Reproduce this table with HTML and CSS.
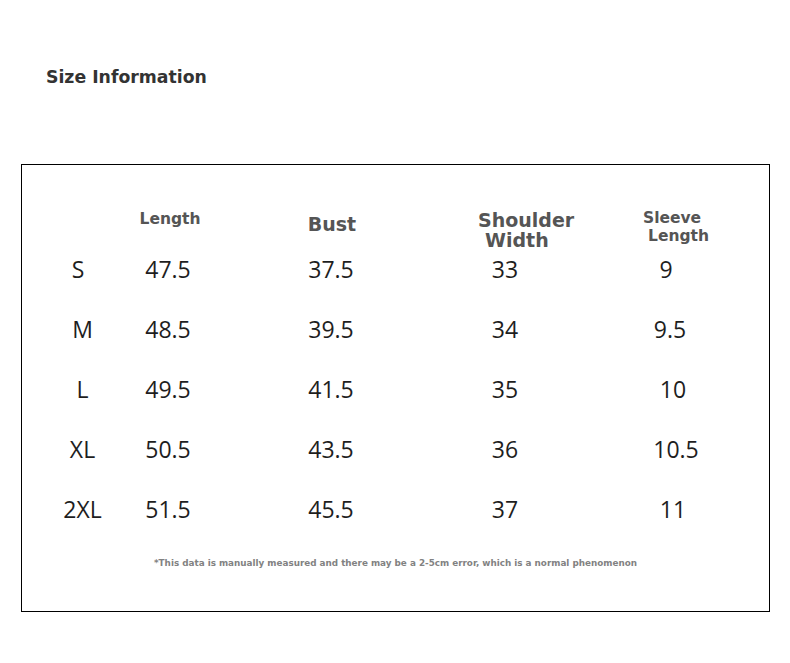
FILE: index.html
```html
<!DOCTYPE html>
<html lang="en">
<head>
<meta charset="utf-8">
<title>Size Information</title>
<link rel="stylesheet" href="styles.css">
</head>
<body>
<div class="page">
  <h1 class="title">Size Information</h1>
  <section class="chart">
    <div class="grid">
      <div class="head head-size"></div>
      <div class="head head-length">Length</div>
      <div class="head head-bust">Bust</div>
      <div class="head head-shoulder"><span class="l1">Shoulder</span><span class="l2">Width</span></div>
      <div class="head head-sleeve"><span class="l1">Sleeve</span><span class="l2">Length</span></div>

      <div class="cell size s-s">S</div><div class="cell">47.5</div><div class="cell">37.5</div><div class="cell">33</div><div class="cell sl-1">9</div>
      <div class="cell size">M</div><div class="cell">48.5</div><div class="cell">39.5</div><div class="cell">34</div><div class="cell">9.5</div>
      <div class="cell size">L</div><div class="cell">49.5</div><div class="cell">41.5</div><div class="cell">35</div><div class="cell sl-2">10</div>
      <div class="cell size">XL</div><div class="cell">50.5</div><div class="cell">43.5</div><div class="cell">36</div><div class="cell sl-3">10.5</div>
      <div class="cell size">2XL</div><div class="cell">51.5</div><div class="cell">45.5</div><div class="cell">37</div><div class="cell sl-2">11</div>
    </div>
    <p class="note">*This data is manually measured and there may be a 2-5cm error, which is a normal phenomenon</p>
  </section>
</div>
</body>
</html>
```
FILE: styles.css
```css
html, body {
  margin: 0;
  padding: 0;
  background: #ffffff;
}

.page {
  width: 790px;
  height: 663px;
  padding-top: 67px;
  box-sizing: border-box;
}

.title {
  margin: 0 0 0 46px;
  font-family: "DejaVu Sans", sans-serif;
  font-weight: bold;
  font-size: 17.3px;
  line-height: 20px;
  color: #333333;
}

.chart {
  margin: 77px 0 0 21px;
  width: 749px;
  height: 448px;
  box-sizing: border-box;
  border: 1px solid #000000;
}

.grid {
  display: grid;
  grid-template-columns: 64px 112px 214px 134px 196px;
  grid-template-rows: 74px repeat(5, 60px);
  padding-left: 26px;
}

.head {
  font-family: "DejaVu Sans", sans-serif;
  font-weight: bold;
  color: #555555;
  white-space: nowrap;
}

.head .l1,
.head .l2 {
  display: block;
}

.head-length {
  font-size: 15.5px;
  line-height: 20px;
  padding-top: 44px;
  text-align: center;
  padding-left: 4px;
}

.head-bust {
  font-size: 19px;
  line-height: 20px;
  padding-top: 49px;
  text-align: center;
  padding-left: 2px;
}

.head-shoulder {
  font-size: 19px;
  line-height: 20px;
  padding-top: 45px;
  padding-left: 40px;
}

.head-shoulder .l2 {
  padding-left: 7px;
}

.head-sleeve {
  font-size: 15.5px;
  line-height: 18px;
  padding-top: 44px;
  padding-left: 71px;
}

.head-sleeve .l2 {
  padding-left: 5px;
}

.cell {
  font-family: "Open Sans", "Noto Sans", sans-serif;
  font-size: 23px;
  line-height: 60px;
  color: #1e1e1e;
  text-align: center;
}

.size {
  padding-left: 5px;
}

.s-s {
  padding-left: 0;
  padding-right: 4px;
}

.sl-1 { padding-right: 8px; }
.sl-2 { padding-left: 6px; }
.sl-3 { padding-left: 12px; }

.note {
  margin: 17px 0 0;
  font-family: "DejaVu Sans", sans-serif;
  font-weight: bold;
  font-size: 8.8px;
  line-height: 14px;
  color: #828282;
  text-align: center;
}
```
